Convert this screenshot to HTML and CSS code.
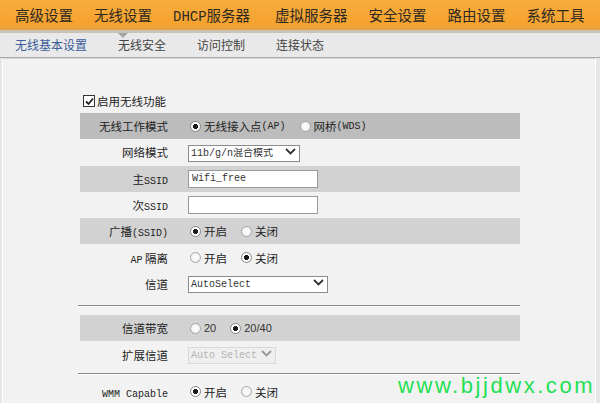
FILE: index.html
```html
<!DOCTYPE html>
<html lang="zh-CN">
<head>
	<meta charset="UTF-8">
	<meta name="viewport" content="width=device-width, initial-scale=1.0">
	<title>无线基本设置</title>

	<link rel="stylesheet" href="styles.css">
</head>
<body>
	<div class="topnav">
		<a>高级设置</a>
		<a class="on">无线设置</a>
		<a class="wide"><span class="en">DHCP</span>服务器</a>
		<a>虚拟服务器</a>
		<a>安全设置</a>
		<a>路由设置</a>
		<a>系统工具</a>
	</div>

	<div class="subnav">
		<a class="active">无线基本设置</a>
		<a>无线安全</a>
		<a>访问控制</a>
		<a>连接状态</a>
	</div>

	<div class="panel">
		<form class="wl-form">
			<label class="enable">
				<span class="chk">
					<svg width="9" height="9" viewBox="0 0 9 9"><polyline points="1,4.5 3.5,7 8,1.5" fill="none" stroke="#222" stroke-width="1.8"/></svg>
				</span>
				启用无线功能
			</label>

			<div class="row dark">
				<div class="lbl">无线工作模式</div>
				<div class="val">
					<label class="opt"><input type="radio" name="mode" checked>无线接入点<span class="en">(AP)</span></label>
					<label class="opt"><input type="radio" name="mode">网桥<span class="en">(WDS)</span></label>
				</div>
			</div>
			<div class="row">
				<div class="lbl">网络模式</div>
				<div class="val">
					<span class="sel w-mode">
						<select><option>11b/g/n混合模式</option></select>
						<svg class="arrow" width="11" height="7" viewBox="0 0 11 7"><polyline points="1,1 5.5,5.5 10,1" fill="none" stroke="#333" stroke-width="1.8"/></svg>
					</span>
				</div>
			</div>
			<div class="row grey">
				<div class="lbl">主<span class="en">SSID</span></div>
				<div class="val"><input class="txt" type="text" value="Wifi_free"></div>
			</div>
			<div class="row">
				<div class="lbl">次<span class="en">SSID</span></div>
				<div class="val"><input class="txt" type="text" value=""></div>
			</div>
			<div class="row grey">
				<div class="lbl">广播<span class="en">(SSID)</span></div>
				<div class="val">
					<label class="opt"><input type="radio" name="bc" checked>开启</label>
					<label class="opt"><input type="radio" name="bc">关闭</label>
				</div>
			</div>
			<div class="row">
				<div class="lbl"><span class="en">AP</span> 隔离</div>
				<div class="val">
					<label class="opt"><input type="radio" name="iso">开启</label>
					<label class="opt"><input type="radio" name="iso" checked>关闭</label>
				</div>
			</div>
			<div class="row">
				<div class="lbl">信道</div>
				<div class="val">
					<span class="sel w-chan">
						<select><option>AutoSelect</option></select>
						<svg class="arrow" width="11" height="7" viewBox="0 0 11 7"><polyline points="1,1 5.5,5.5 10,1" fill="none" stroke="#333" stroke-width="1.8"/></svg>
					</span>
				</div>
			</div>

			<div class="sep"></div>

			<div class="row grey">
				<div class="lbl">信道带宽</div>
				<div class="val">
					<label class="opt num"><input type="radio" name="bw">20</label>
					<label class="opt num"><input type="radio" name="bw" checked>20/40</label>
				</div>
			</div>
			<div class="row">
				<div class="lbl">扩展信道</div>
				<div class="val">
					<span class="sel w-ext off">
						<select disabled><option>Auto Select</option></select>
						<svg class="arrow" width="11" height="7" viewBox="0 0 11 7"><polyline points="1,1 5.5,5.5 10,1" fill="none" stroke="#999" stroke-width="1.8"/></svg>
					</span>
				</div>
			</div>

			<div class="sep sep2"></div>

			<div class="row">
				<div class="lbl"><span class="en">WMM Capable</span></div>
				<div class="val">
					<label class="opt"><input type="radio" name="wmm" checked>开启</label>
					<label class="opt"><input type="radio" name="wmm">关闭</label>
				</div>
			</div>
		</form>
	</div>

	<div class="watermark">www.bjjdwx.com</div>
</body>
</html>
```

FILE: styles.css
```css
body {
	margin: 0;
	height: 403px;
	overflow: hidden;
	background: #e6e6e6;
	font-family: "Noto Sans CJK SC", sans-serif;
	font-size: 12px;
	color: #222;
	position: relative;
}
.en {
	font-family: "Liberation Mono", monospace;
	font-size: 10px;
}

/* top menu */
.topnav {
	display: flex;
	gap: 21px;
	height: 30px;
	padding-left: 15px;
	background: linear-gradient(#f8ad3e, #f5a22e 80%, #e8a040);
	border-bottom: 3px solid #c9c2b6;
	position: relative;
}
.topnav a {
	position: relative;
	line-height: 30px;
	font-size: 14.5px;
	color: #2e2a22;
	white-space: nowrap;
}
.topnav a.wide {
	margin-right: 4px;
}
.topnav a .en {
	font-size: 14px;
}
.topnav a.on::after {
	content: "";
	position: absolute;
	left: 50%;
	bottom: -8px;
	margin-left: -5px;
	border-left: 5px solid transparent;
	border-right: 5px solid transparent;
	border-top: 5px solid #a3a3a3;
}

/* sub menu */
.subnav {
	display: flex;
	gap: 31px;
	height: 24px;
	padding-left: 15px;
	background: #e9e9e9;
	border-bottom: 1px solid #a9a9a9;
}
.subnav a {
	line-height: 24px;
	font-size: 12px;
	color: #444;
}
.subnav a.active {
	color: #3b5d9c;
}

/* content */
.panel {
	margin: 0 4px 0 2px;
	height: 360px;
	background: #f2f2f2;
	border-left: 1px solid #fff;
	border-right: 1px solid #fff;
	border-top: 1px solid #d8d8d8;
	padding-top: 34px;
}
.wl-form {
	width: 440px;
	margin-left: 77px;
}
.enable {
	display: flex;
	align-items: center;
	gap: 2px;
	height: 16px;
	margin-bottom: 4px;
	padding-left: 3px;
	font-size: 11.5px;
}
.chk {
	display: inline-flex;
	align-items: center;
	justify-content: center;
	width: 10px;
	height: 10px;
	border: 1px solid #333;
	background: #fff;
}

.row {
	display: grid;
	grid-template-columns: 88px 1fr;
	column-gap: 20px;
	align-items: center;
	height: 26.3px;
	font-size: 11.5px;
}
.row.dark {
	background: #bcbcbc;
}
.row.grey {
	background: #d2d2d2;
}
.lbl {
	text-align: right;
	white-space: nowrap;
}
.val {
	display: flex;
	align-items: center;
	gap: 12px;
}

.opt {
	display: flex;
	align-items: center;
	white-space: nowrap;
}
.opt.num {
	font-family: "Liberation Sans", sans-serif;
	font-size: 11px;
	color: #333;
}
.opt input {
	appearance: none;
	width: 11px;
	height: 11px;
	margin: 0 3px 0 2px;
	border: 1px solid #a5a5a5;
	border-radius: 50%;
	background: radial-gradient(#fff, #ececec);
}
.opt input:checked {
	background: radial-gradient(#1a1a1a 0 2.3px, #fff 2.8px);
	border-color: #888;
}

.txt {
	box-sizing: border-box;
	width: 130px;
	height: 18px;
	margin: 0;
	padding: 0 3px;
	border: 1px solid #9a9a9a;
	background: #fff;
	font-family: "Liberation Mono", monospace;
	font-size: 10px;
	color: #333;
}

.sel {
	position: relative;
	display: inline-block;
}
.sel select {
	appearance: none;
	box-sizing: border-box;
	height: 17px;
	margin: 0;
	padding: 0 2px;
	border: 1px solid #8c8c8c;
	border-radius: 0;
	background: #fff;
	font-family: "Liberation Mono", "Noto Sans CJK SC", monospace;
	font-size: 10px;
	color: #333;
}
.sel .arrow {
	position: absolute;
	right: 4px;
	top: 5px;
}
.w-mode select { width: 112px; }
.w-chan select { width: 140px; }
.w-ext select {
	width: 88px;
	background: #eeeeee;
	border-color: #cfcfcf;
	color: #999;
}

.sep {
	margin: 8px 0 8px -2px;
	border-top: 1px solid #8a8a8a;
	border-bottom: 1px solid #fff;
}
.sep2 {
	margin: 5px 0 4px -2px;
}

.watermark {
	position: absolute;
	left: 398px;
	top: 373px;
	font-family: "Liberation Sans", sans-serif;
	font-size: 22px;
	letter-spacing: 2.55px;
	color: #22e052;
}
```
